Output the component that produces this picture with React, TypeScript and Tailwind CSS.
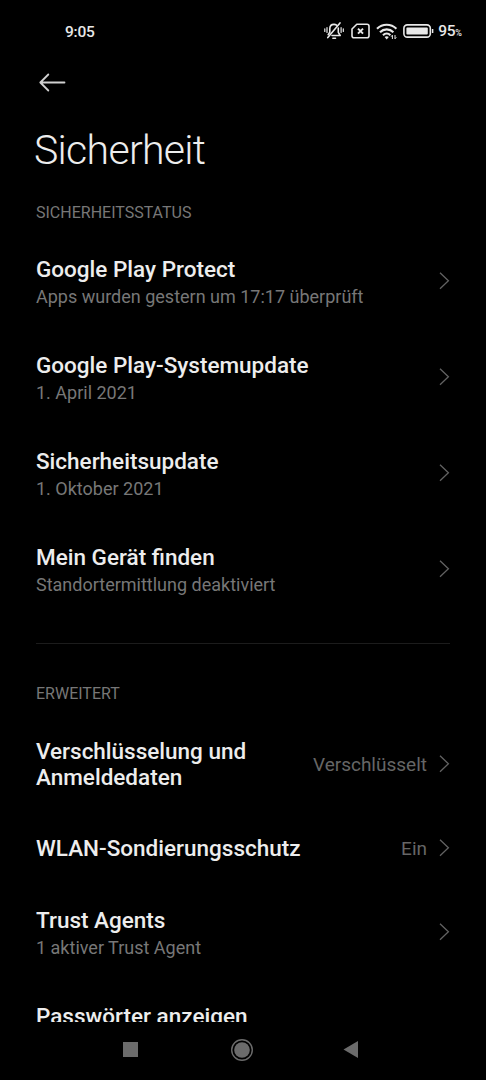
type Item = { title: string; sub?: string; value?: string; height: string; chevron?: boolean };

const statusItems: Item[] = [
  { title: "Google Play Protect", sub: "Apps wurden gestern um 17:17 überprüft", height: "h-24" },
  { title: "Google Play-Systemupdate", sub: "1. April 2021", height: "h-24" },
  { title: "Sicherheitsupdate", sub: "1. Oktober 2021", height: "h-24" },
  { title: "Mein Gerät finden", sub: "Standortermittlung deaktiviert", height: "h-24" },
];

const advancedItems: Item[] = [
  { title: "Verschlüsselung und Anmeldedaten", value: "Verschlüsselt", height: "h-[97px]" },
  { title: "WLAN-Sondierungsschutz", value: "Ein", height: "h-[72px]" },
  { title: "Trust Agents", sub: "1 aktiver Trust Agent", height: "h-24" },
  { title: "Passwörter anzeigen", height: "h-[72px]", chevron: false },
];

function Chevron() {
  return (
    <svg className="ml-3 h-[18px] w-[11px] shrink-0" viewBox="0 0 11 18" fill="none" stroke="#626262" strokeWidth="1.3">
      <path d="M1 0.8l8.4 8L1 16.8" />
    </svg>
  );
}

function Row({ item }: { item: Item }) {
  return (
    <div className={`flex shrink-0 items-center ${item.height}`}>
      <div className="flex min-w-0 flex-1 flex-col">
        <div className="text-[22.5px] leading-[26px] font-medium text-[#ededed]">{item.title}</div>
        {item.sub && <div className="mt-1 -mb-px text-[18px] leading-[22px] whitespace-nowrap text-[#777777]">{item.sub}</div>}
      </div>
      {item.value && <div className="ml-3 pt-[2px] text-[19px] leading-7 text-[#666666]">{item.value}</div>}
      {item.chevron !== false && <Chevron />}
    </div>
  );
}

function StatusBar() {
  return (
    <header className="flex h-[60px] shrink-0 items-center pt-[2px] pr-6 pl-[65px] text-[#e8e8e8]">
      <span className="pt-[2px] text-[15.5px] leading-5 font-medium tracking-[-0.2px]">9:05</span>
      <svg className="ml-auto h-[18px] w-5" viewBox="0 0 20 18" fill="none" stroke="currentColor" strokeWidth="1.6" strokeLinecap="round" strokeLinejoin="round">
        <path d="M4.2 12.6L5.8 10.3V6.8C5.8 4.200 7.500 2.400 10 2.400c1 0 1.900.3 2.600.8M14.300 6v4.300l1.900 3.200H8M8.900 16.200h2.600" />
        <path d="M16 0.900L3.800 15.600" />
        <path d="M3 5.500v5M.8 6.800v2.600M17.100 5.500v5M19.300 6.800v2.600" strokeWidth="1.2" />
      </svg>
      <svg className="ml-[7px] h-4 w-[19px]" viewBox="0 0 19 16" fill="none" stroke="currentColor" strokeWidth="1.6">
        <path d="M5.8 1.2H16a2 2 0 0 1 2 2v9.6a2 2 0 0 1-2 2H3a2 2 0 0 1-2-2V6z" strokeLinejoin="round" />
        <path d="M7 5.6l5 5M12 5.6l-5 5" strokeWidth="2" />
      </svg>
      <svg className="ml-1.5 h-[17px] w-[22px]" viewBox="0 0 22 17" fill="none" stroke="currentColor" strokeWidth="2.1">
        <path d="M1 5.8c5.4-5.4 14-5.4 19.4 0M4 9.2c3.8-3.8 9.6-3.8 13.4 0M7 12.3c2.2-2.2 5.2-2.2 7.4 0" />
        <path d="M8.6 14.1c1.2-1 3-1 4.2 0L10.7 16.4z" fill="currentColor" stroke="none" />
        <path d="M16.4 16v-3.8l-1.3 1.5M19 12v3.8l1.3-1.5" strokeWidth="1" />
      </svg>
      <svg className="ml-[5px] h-[14px] w-[31px]" viewBox="0 0 31 14" fill="none">
        <rect x="0.9" y="0.9" width="26.4" height="12.2" rx="3.4" stroke="currentColor" strokeWidth="1.6" />
        <rect x="3.4" y="3.4" width="21.4" height="7.2" rx="1" fill="currentColor" />
        <path d="M29.6 5v4" stroke="currentColor" strokeWidth="1.5" />
      </svg>
      <span className="ml-1 flex items-baseline pt-[2px] leading-5 font-medium">
        <span className="text-[15.5px] tracking-[-0.3px]">95</span>
        <span className="text-[9px]">%</span>
      </span>
    </header>
  );
}

function NavBar() {
  return (
    <nav className="flex h-[58px] shrink-0 items-center pb-[3px] pl-[123px] text-[#6b6b6b]">
      <div className="h-[15px] w-[15px] bg-current" />
      <svg className="ml-[92px] h-6 w-6" viewBox="0 0 24 24">
        <circle cx="12" cy="12" r="10.3" fill="none" stroke="currentColor" strokeWidth="1.4" />
        <circle cx="12" cy="12" r="7.8" fill="currentColor" />
      </svg>
      <svg className="ml-[89px] h-[17px] w-[15px]" viewBox="0 0 15 17">
        <path d="M15 0v17L0.5 8.5z" fill="currentColor" />
      </svg>
    </nav>
  );
}

export default function App() {
  return (
    <div className="flex h-[1080px] w-[486px] flex-col overflow-hidden bg-black font-['Roboto',sans-serif]">
      <StatusBar />
      <div className="flex h-[45px] shrink-0 items-center pl-[39px]">
        <svg className="h-[19px] w-[27px]" viewBox="0 0 27 19" fill="none" stroke="#d0d0d0" strokeWidth="1.8" strokeLinecap="round" strokeLinejoin="round">
          <path d="M9.3 1.5L1.3 9.5l8 8M1.3 9.5H25.5" />
        </svg>
      </div>
      <main className="flex min-h-0 flex-1 flex-col overflow-hidden pr-9 pl-9">
        <h1 className="-ml-0.5 mt-[21px] shrink-0 text-[41px] leading-[48px] font-light tracking-[-0.7px] text-[#ededed]">Sicherheit</h1>
        <h2 className="mt-[29px] shrink-0 text-[16px] leading-5 text-[#777777]">SICHERHEITSSTATUS</h2>
        <section className="mt-2.5 flex shrink-0 flex-col">
          {statusItems.map((item) => (
            <Row key={item.title} item={item} />
          ))}
        </section>
        <hr className="mt-[26px] shrink-0 border-t border-[#1c1c1c]" />
        <h2 className="mt-10 shrink-0 text-[16px] leading-5 text-[#777777]">ERWEITERT</h2>
        <section className="mt-[11px] flex shrink-0 flex-col">
          {advancedItems.map((item) => (
            <Row key={item.title} item={item} />
          ))}
        </section>
      </main>
      <NavBar />
    </div>
  );
}
